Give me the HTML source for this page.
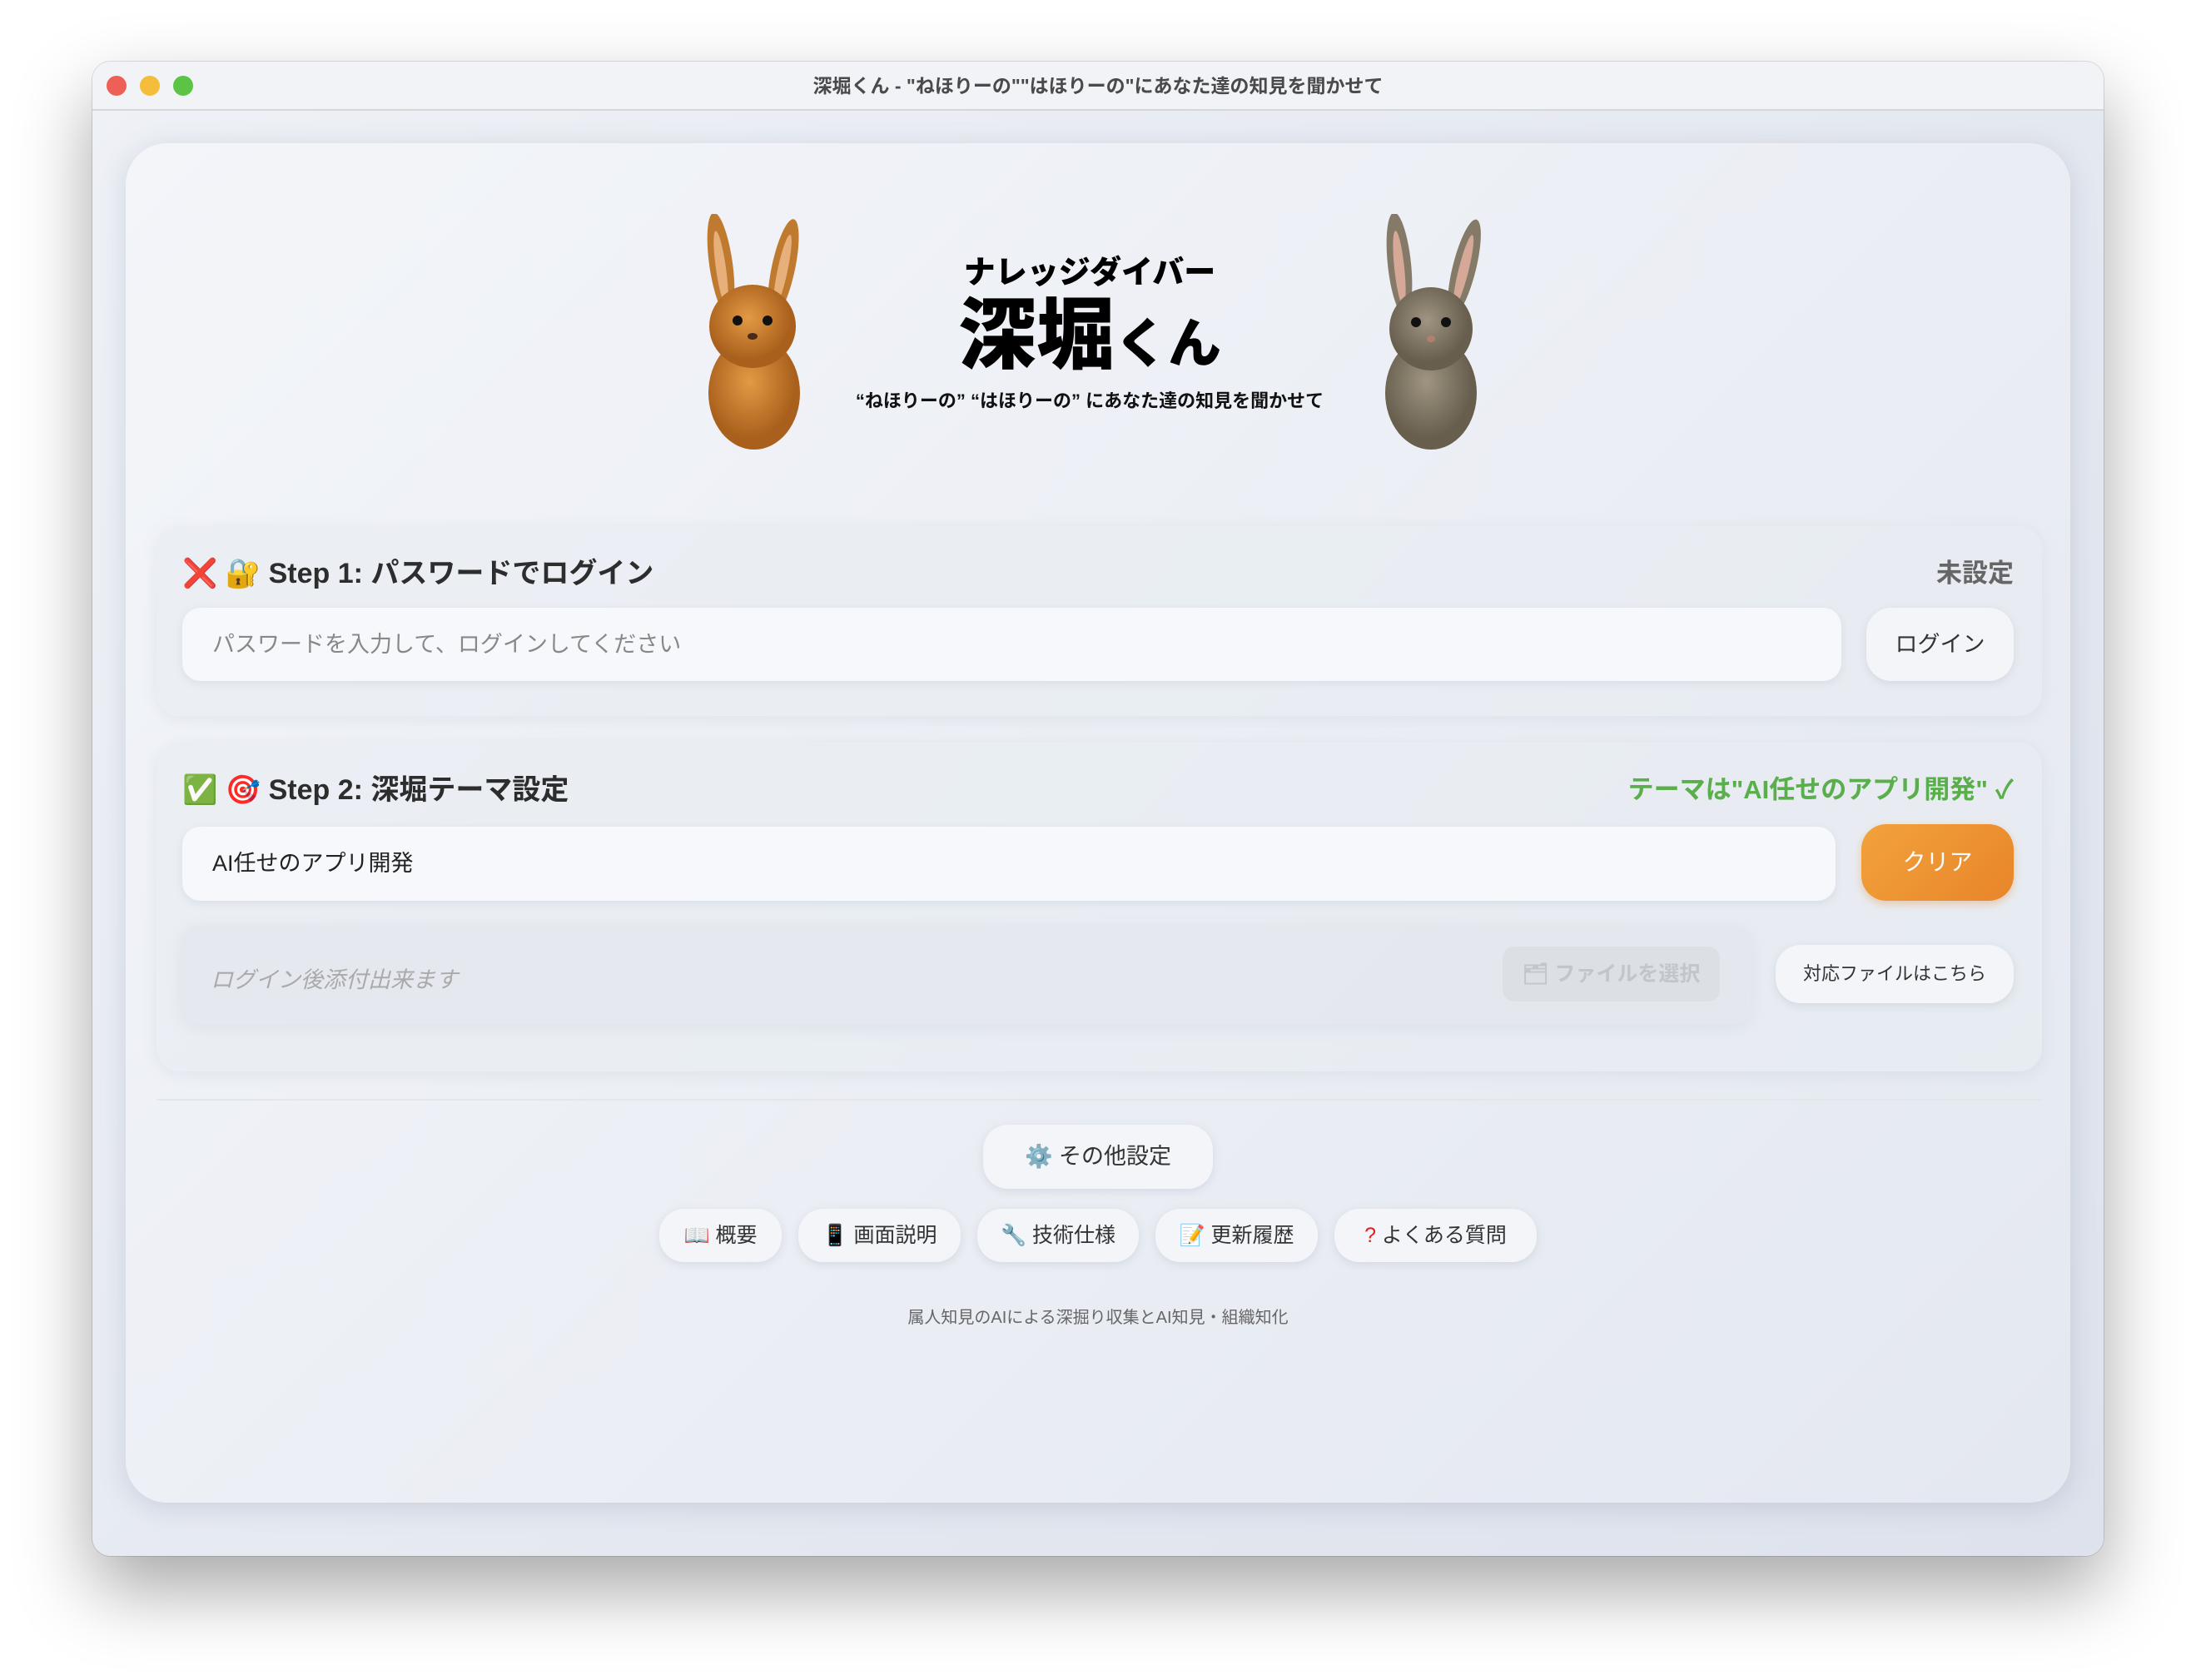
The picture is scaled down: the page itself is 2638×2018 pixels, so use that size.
<!DOCTYPE html>
<html><head><meta charset="utf-8"><style>
*{box-sizing:border-box;margin:0;padding:0}
body{width:2638px;height:2018px;background:#fff;position:relative;overflow:hidden;font-family:"Liberation Sans","Noto Sans CJK JP",sans-serif}
.win{position:absolute;left:111px;top:74px;width:2416px;height:1795px;border-radius:22px;background:linear-gradient(135deg,#eef1f6,#dde2ec);box-shadow:0 40px 90px rgba(0,0,0,.35),0 0 0 1px rgba(0,0,0,.12);overflow:hidden}
.tb{position:absolute;left:0;top:0;right:0;height:59px;background:#f2f3f6;border-bottom:2px solid #d4d6da;text-align:center;font-size:23px;font-weight:bold;color:#4a4a4a;line-height:59px}
.dot{position:absolute;top:17px;width:24px;height:24px;border-radius:50%}
.card{position:absolute;left:40px;top:98px;width:2336px;height:1633px;border-radius:50px;background:linear-gradient(135deg,#f3f5f9,#e4e8f0);box-shadow:0 6px 30px rgba(120,130,160,.25)}
.abs{position:absolute}
.ctr{position:absolute;left:-111px;width:2538px;text-align:center}
.panel{position:absolute;border-radius:28px;background:rgba(232,236,242,.6);box-shadow:0 4px 18px rgba(150,160,180,.15)}
.h{position:absolute;font-size:34px;font-weight:bold;color:#2d2d2d;white-space:nowrap}
.inp{position:absolute;background:#f7f8fb;border-radius:22px;box-shadow:0 3px 10px rgba(150,160,180,.2);font-size:27px;line-height:88px;padding-left:36px}
.btn{position:absolute;background:#f3f5f9;border-radius:30px;box-shadow:0 3px 10px rgba(150,160,180,.25);text-align:center;color:#333;white-space:nowrap}
</style></head><body>
<div class="win">
<div class="tb">深堀くん - "ねほりーの""はほりーの"にあなた達の知見を聞かせて
<div class="dot" style="left:17px;background:#ed5f57"></div><div class="dot" style="left:57px;background:#f4bd3a"></div><div class="dot" style="left:97px;background:#5cc444"></div></div>
<div class="card">
<svg class="abs" style="left:685px;top:85px" width="145" height="285" viewBox="0 0 145 285">
<defs><radialGradient id="o" cx=".45" cy=".4"><stop offset="0" stop-color="#e39a45"/><stop offset="1" stop-color="#a9601c"/></radialGradient></defs>
<ellipse cx="30" cy="60" rx="14" ry="62" fill="#c07a30" transform="rotate(-8 30 60)"/><ellipse cx="105" cy="65" rx="14" ry="60" fill="#c07a30" transform="rotate(12 105 65)"/>
<ellipse cx="30" cy="65" rx="6" ry="45" fill="#e7b07a" transform="rotate(-8 30 65)"/><ellipse cx="104" cy="68" rx="6" ry="44" fill="#e7b07a" transform="rotate(12 104 68)"/>
<ellipse cx="70" cy="215" rx="55" ry="68" fill="url(#o)"/><ellipse cx="68" cy="135" rx="52" ry="50" fill="url(#o)"/>
<circle cx="50" cy="128" r="6" fill="#111"/><circle cx="86" cy="128" r="6" fill="#111"/><ellipse cx="68" cy="147" rx="6" ry="4" fill="#4a2a1a"/>
</svg>
<svg class="abs" style="left:1490px;top:85px" width="160" height="285" viewBox="0 0 160 285">
<defs><radialGradient id="g" cx=".45" cy=".4"><stop offset="0" stop-color="#a09582"/><stop offset="1" stop-color="#675e4e"/></radialGradient></defs>
<ellipse cx="40" cy="60" rx="14" ry="62" fill="#857a68" transform="rotate(-6 40 60)"/><ellipse cx="118" cy="65" rx="14" ry="60" fill="#857a68" transform="rotate(14 118 65)"/>
<ellipse cx="40" cy="65" rx="6" ry="45" fill="#d6a898" transform="rotate(-6 40 65)"/><ellipse cx="117" cy="68" rx="6" ry="44" fill="#d6a898" transform="rotate(14 117 68)"/>
<ellipse cx="78" cy="215" rx="55" ry="68" fill="url(#g)"/><ellipse cx="78" cy="138" rx="50" ry="50" fill="url(#g)"/>
<circle cx="60" cy="130" r="6" fill="#111"/><circle cx="96" cy="130" r="6" fill="#111"/><ellipse cx="78" cy="150" rx="5" ry="4" fill="#b08070"/>
</svg>
<div class="ctr" style="top:124px;font-size:38px;font-weight:900;color:#000">ナレッジダイバー</div>
<div class="ctr" style="top:176px;font-size:94px;font-weight:900;color:#000;line-height:110px">深堀<span style="font-size:64px">くん</span></div>
<div class="ctr" style="top:292px;font-size:22px;font-weight:bold;color:#111">“ねほりーの” “はほりーの” にあなた達の知見を聞かせて</div>

<div class="panel" style="left:37px;top:460px;width:2265px;height:228px"></div>
<div class="h" style="left:68px;top:489px"><span style="color:#d9211f">❌</span> 🔐 Step 1: パスワードでログイン</div>
<div class="abs" style="right:68px;top:491px;font-size:31px;font-weight:bold;color:#666">未設定</div>
<div class="inp" style="left:68px;top:558px;width:1993px;height:88px;color:#888">パスワードを入力して、ログインしてください</div>
<div class="btn" style="left:2091px;top:558px;width:177px;height:88px;line-height:88px;font-size:27px">ログイン</div>

<div class="panel" style="left:37px;top:720px;width:2265px;height:395px"></div>
<div class="h" style="left:68px;top:749px"><span style="color:#3a9a3a">✅</span> 🎯 Step 2: 深堀テーマ設定</div>
<div class="abs" style="right:68px;top:751px;font-size:31px;font-weight:bold;color:#5aae4c">テーマは"AI任せのアプリ開発" ✓</div>
<div class="inp" style="left:68px;top:821px;width:1986px;height:89px;color:#222">AI任せのアプリ開発</div>
<div class="btn" style="left:2085px;top:818px;width:183px;height:92px;line-height:92px;font-size:28px;color:#fff;background:linear-gradient(135deg,#f2a23c,#e8852a);box-shadow:0 4px 10px rgba(232,133,42,.35)">クリア</div>
<div class="panel" style="left:68px;top:940px;width:1884px;height:118px;border-radius:20px;background:rgba(226,230,236,.7)"></div>
<div class="abs" style="left:102px;top:983px;font-size:27px;font-style:italic;color:#aaa">ログイン後添付出来ます</div>
<div class="btn" style="left:1654px;top:965px;width:261px;height:66px;line-height:66px;font-size:25px;font-weight:bold;color:#c2c6cc;background:#dcdfe4;border-radius:14px;box-shadow:none">🗂 ファイルを選択</div>
<div class="btn" style="left:1982px;top:963px;width:286px;height:70px;line-height:70px;font-size:22px">対応ファイルはこちら</div>

<div class="abs" style="left:37px;top:1148px;width:2265px;height:2px;background:#e3e6eb"></div>
<div class="btn" style="left:1030px;top:1179px;width:276px;height:77px;line-height:77px;font-size:27px">⚙️ その他設定</div>
<div class="btn" style="left:641px;top:1280px;width:147px;height:64px;line-height:64px;font-size:25px">📖 概要</div>
<div class="btn" style="left:808px;top:1280px;width:195px;height:64px;line-height:64px;font-size:25px">📱 画面説明</div>
<div class="btn" style="left:1023px;top:1280px;width:194px;height:64px;line-height:64px;font-size:25px">🔧 技術仕様</div>
<div class="btn" style="left:1237px;top:1280px;width:195px;height:64px;line-height:64px;font-size:25px">📝 更新履歴</div>
<div class="btn" style="left:1452px;top:1280px;width:243px;height:64px;line-height:64px;font-size:25px"><span style="color:#d22">?</span> よくある質問</div>
<div class="ctr" style="left:-101px;top:1394px;font-size:20px;color:#666">属人知見のAIによる深掘り収集とAI知見・組織知化</div>
</div>
</div>
</body></html>
